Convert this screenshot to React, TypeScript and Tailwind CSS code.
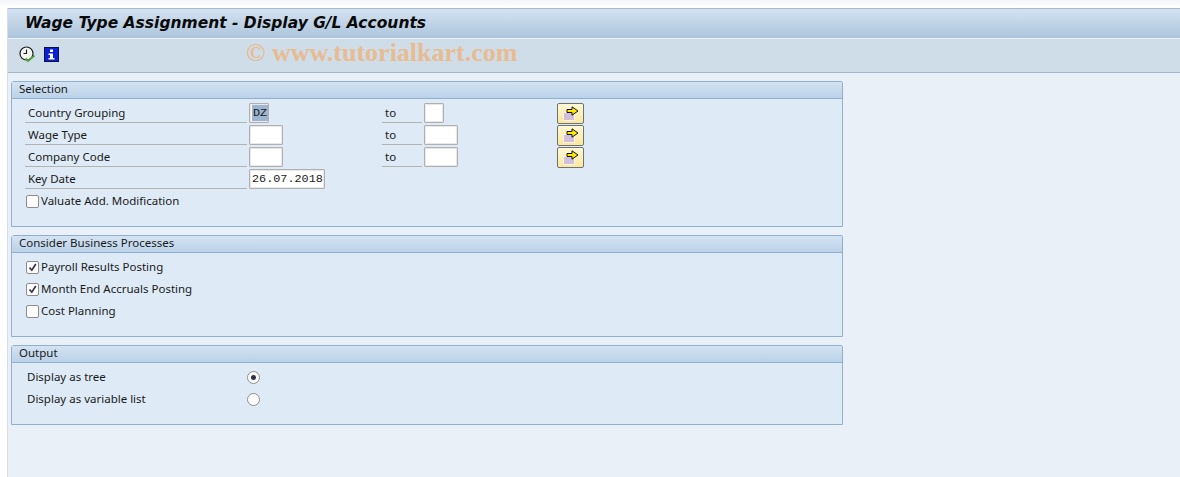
const labelFont = "font-['Noto_Sans','DejaVu_Sans',sans-serif] text-[11.5px] text-[#1a1a1a]";

function ClockCheckIcon() {
  return (
    <svg width="17" height="17" viewBox="0 0 17 17" className="shrink-0">
      <circle cx="7.5" cy="7.5" r="6.5" fill="#f4f6f6" stroke="#1c1c1c" strokeWidth="1.2" />
      <path d="M7.5 3.5V7.5H4.5" fill="none" stroke="#1c1c1c" strokeWidth="1.1" />
      <path d="M6.5 12.5L9 15L15.5 9.5" fill="none" stroke="#4f9f3a" strokeWidth="2" />
    </svg>
  );
}

function InfoIcon() {
  return (
    <svg width="15" height="15" viewBox="0 0 15 15" className="shrink-0 ml-[8px]">
      <rect x="0.5" y="0.5" width="14" height="14" fill="#0a1fd8" stroke="#0b1240" />
      <rect x="6" y="2.5" width="3" height="2.5" fill="#fff" />
      <path d="M4.5 6.5H9V11H10.5V12.5H4.5V11H6V8H4.5Z" fill="#fff" />
    </svg>
  );
}

function ArrowIcon() {
  return (
    <svg width="16" height="15" viewBox="0 0 16 15">
      <rect x="0.5" y="6.5" width="11" height="8" fill="#d2bfdc" stroke="#f7f3e6" />
      <path d="M4 3.5H9V0.8L15 5L9 9.2V6.5H4Z" fill="#ffe800" stroke="#111" strokeWidth="1" />
    </svg>
  );
}

function SelectButton() {
  return (
    <button className="w-[27px] h-[21px] flex items-center justify-center rounded-[2px] border border-[#6f7272] bg-gradient-to-b from-[#fff8d8] to-[#fce79a]">
      <ArrowIcon />
    </button>
  );
}

function Field({ width, value, selected }: { width: string; value?: string; selected?: boolean }) {
  return (
    <div
      className={`${width} h-[20px] shrink-0 flex items-center pl-[2px] bg-white border border-[#b0b0b0] rounded-[1px] shadow-[inset_0_0_0_1px_#e8e8e8] font-['Liberation_Mono','DejaVu_Sans_Mono',monospace] text-[11.8px] text-[#1a1a1a]`}
    >
      {selected ? <span className="w-[16px] h-[16px] pt-[1px] leading-[15px] text-center bg-[#9db5d1]">{value}</span> : <span className="pt-[2px]">{value}</span>}
    </div>
  );
}

function FieldLabel({ width, children }: { width: string; children: React.ReactNode }) {
  return (
    <div className={`${width} h-[21px] mt-[-1px] pl-[3px] leading-[22px] border-b border-[#b3b3b3] ${labelFont}`}>
      {children}
    </div>
  );
}

function RangeRow({ label, from, to, fromValue, selected }: { label: string; from: string; to: string; fromValue?: string; selected?: boolean }) {
  return (
    <div className="flex items-center h-[22px]">
      <FieldLabel width="w-[222px]">{label}</FieldLabel>
      <div className="ml-[2px] w-[133px]">
        <Field width={from} value={fromValue} selected={selected} />
      </div>
      <FieldLabel width="w-[40px]">to</FieldLabel>
      <div className="ml-[2px] w-[133px]">
        <Field width={to} />
      </div>
      <SelectButton />
    </div>
  );
}

function Checkbox({ label, checked }: { label: string; checked?: boolean }) {
  return (
    <div className="flex items-center h-[22px]">
      <span className="w-[13px] h-[13px] flex items-center justify-center bg-white border border-[#8c8c8c] rounded-[2px]">
        {checked && (
          <svg width="9" height="9" viewBox="0 0 9 9">
            <path d="M1.5 4.5L3.8 7.2L7.8 1" fill="none" stroke="#33334a" strokeWidth="1.7" />
          </svg>
        )}
      </span>
      <span className={`ml-[2px] ${labelFont}`}>{label}</span>
    </div>
  );
}

function Radio({ label, checked }: { label: string; checked?: boolean }) {
  return (
    <div className="flex items-center h-[22px]">
      <span className={`w-[220px] ${labelFont}`}>{label}</span>
      <span className="w-[13px] h-[13px] flex items-center justify-center bg-white border border-[#8c8c8c] rounded-full">
        {checked && <span className="w-[5px] h-[5px] rounded-full bg-[#2d2d48]" />}
      </span>
    </div>
  );
}

function Section({ title, height, children }: { title: string; height: string; children: React.ReactNode }) {
  return (
    <section className={`${height} w-[832px] flex flex-col border border-[#8fb0d2] rounded-tl-[3px] rounded-tr-[2px] bg-[#deeaf5]`}>
      <h2 className={`h-[17px] shrink-0 pl-[7px] leading-[14px] border-b border-[#8fb0d2] bg-gradient-to-b from-[#d3e3f2] to-[#bbd2e8] ${labelFont}`}>
        {title}
      </h2>
      {children}
    </section>
  );
}

export default function App() {
  return (
    <div className="h-[477px] w-[1180px] overflow-hidden bg-gradient-to-b from-[#f3f5f9] to-white to-[8px] pt-[8px] pl-[7px]">
      <div className="h-[469px] flex flex-col bg-[#e9f0f8] border-l border-[#d5dde8]">
        <header className="h-[31px] shrink-0 pl-[17px] flex items-center border-t border-[#a9b9cc] border-b border-b-[#eaf1f8] bg-gradient-to-b from-[#d3e2f1] to-[#adc5dc]">
          <h1 className="font-['DejaVu_Sans',sans-serif] font-bold italic text-[15.5px] text-[#0a0a0a]">
            Wage Type Assignment - Display G/L Accounts
          </h1>
        </header>

        <div className="h-[34px] shrink-0 pl-[11px] pb-[3px] flex items-center bg-[#cfdde8] border-b border-[#a3b5cb]">
          <ClockCheckIcon />
          <InfoIcon />
          <span className="ml-[187px] mt-[-3px] font-['Liberation_Serif',serif] font-bold text-[26px] leading-[28px] text-[#e8bb91] whitespace-nowrap">
            © www.tutorialkart.com
          </span>
        </div>

        <main className="pt-[8px] pl-[3px] flex flex-col gap-[8px]">
          <Section title="Selection" height="h-[146px]">
            <div className="pt-[3px] pl-[13px]">
              <RangeRow label="Country Grouping" from="w-[20px]" to="w-[20px]" fromValue="DZ" selected />
              <RangeRow label="Wage Type" from="w-[34px]" to="w-[34px]" />
              <RangeRow label="Company Code" from="w-[34px]" to="w-[34px]" />
              <div className="flex items-center h-[22px]">
                <FieldLabel width="w-[222px]">Key Date</FieldLabel>
                <div className="ml-[2px]">
                  <Field width="w-[76px]" value="26.07.2018" />
                </div>
              </div>
              <div className="ml-[1px]">
                <Checkbox label="Valuate Add. Modification" />
              </div>
            </div>
          </Section>
          <Section title="Consider Business Processes" height="h-[102px]">
            <div className="pt-[3px] pl-[14px]">
              <Checkbox label="Payroll Results Posting" checked />
              <Checkbox label="Month End Accruals Posting" checked />
              <Checkbox label="Cost Planning" />
            </div>
          </Section>
          <Section title="Output" height="h-[80px]">
            <div className="pt-[3px] pl-[15px]">
              <Radio label="Display as tree" checked />
              <Radio label="Display as variable list" />
            </div>
          </Section>
        </main>
      </div>
    </div>
  );
}
